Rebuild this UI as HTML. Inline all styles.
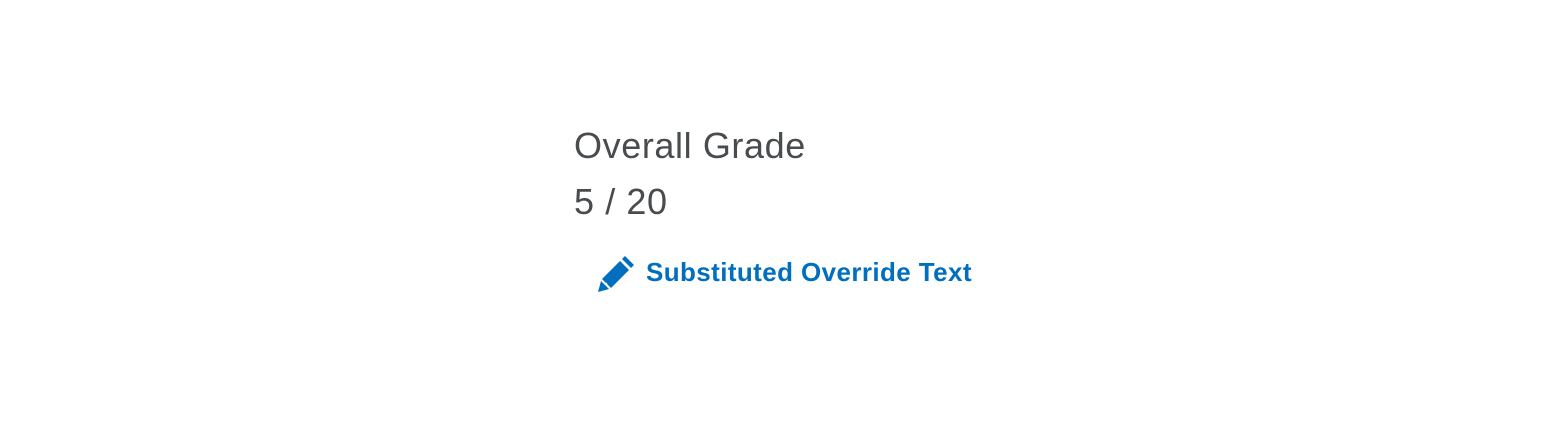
<!DOCTYPE html>
<html><head><style>
body{margin:0;width:1568px;height:436px;background:#fff;position:relative;font-family:"Liberation Sans",sans-serif;overflow:hidden}
.t{position:absolute;left:574px;color:#494c4e;font-size:36px;letter-spacing:0.6px;white-space:nowrap}
.l{position:absolute;left:646px;top:257px;color:#006fbf;font-weight:bold;font-size:26px;white-space:nowrap;letter-spacing:0.4px}
svg{position:absolute;left:597px;top:255px}
</style></head><body>
<div class="t" style="top:125px">Overall Grade</div>
<div class="t" style="top:181px">5 / 20</div>
<svg width="38" height="38" viewBox="0 0 38 38">
<path d="M28 1 L37 10 L34 13 L25 4 Z" fill="#006fbf"/>
<path d="M23 6 L32 15 L14 33 L5 24 Z" fill="#006fbf"/>
<path d="M4 26 L12 34 L1 37 Z" fill="#006fbf"/>
<circle cx="9" cy="29" r="1.3" fill="#fff"/>
</svg>
<div class="l">Substituted Override Text</div>
</body></html>
